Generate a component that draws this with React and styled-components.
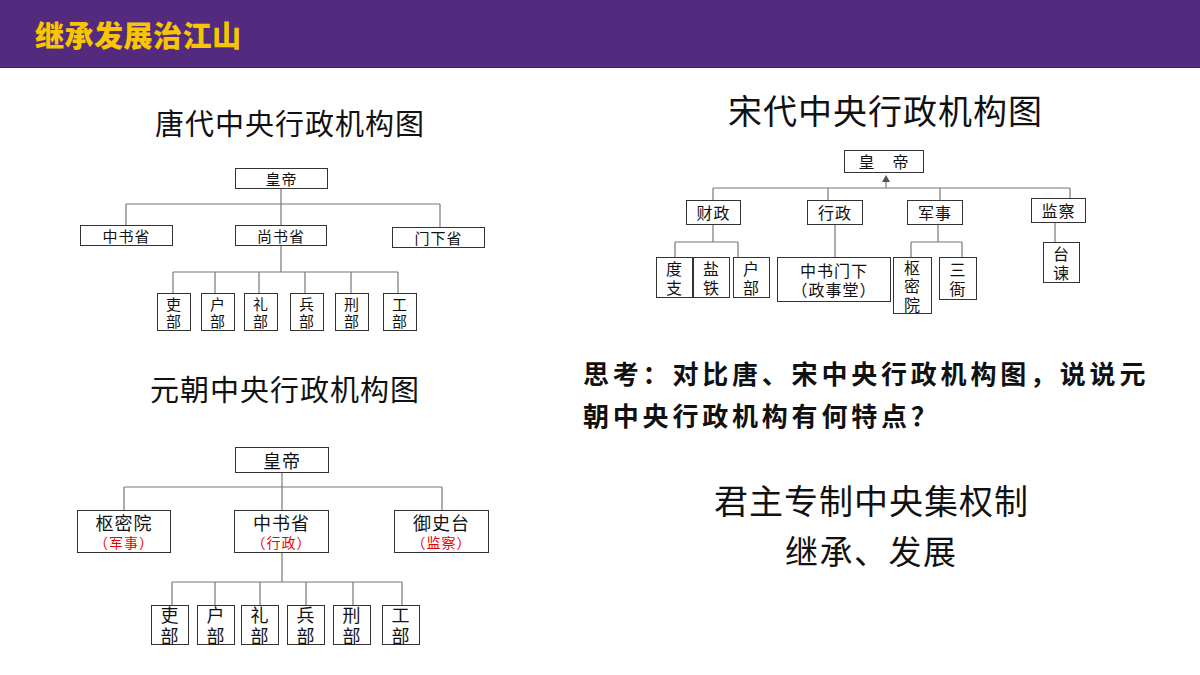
import React from 'react';
import styled, { createGlobalStyle } from 'styled-components';

const GlobalStyle = createGlobalStyle`
  html, body { margin: 0; padding: 0; background: #fff; }
  body { font-family: "Noto Sans CJK SC", "Noto Sans", sans-serif; color: #111; }
`;

const tang = {
  ox: 80, oy: 165, w: 420, h: 175, fs: 15,
  nodes: [
    { x: 235, y: 168, w: 93, h: 21, t: ['皇帝'] },
    { x: 80, y: 225, w: 93, h: 21, t: ['中书省'] },
    { x: 235, y: 225, w: 92, h: 21, t: ['尚书省'] },
    { x: 392, y: 227, w: 93, h: 21, t: ['门下省'] },
    ...[[157, '吏'], [201, '户'], [244, '礼'], [290, '兵'], [335, '刑'], [383, '工']].map(([x, c]) => ({
      x, y: 293, w: 34, h: 38, t: [c, '部'],
    })),
  ],
  lines: [
    [281, 189, 281, 225], [126, 204, 440, 204], [126, 204, 126, 225], [440, 204, 440, 227],
    [281, 246, 281, 272], [173, 272, 398, 272],
    ...[173, 215, 259, 305, 351, 398].map(x => [x, 272, x, 293]),
  ],
};

const yuan = {
  ox: 75, oy: 440, w: 420, h: 205, fs: 18,
  nodes: [
    { x: 235, y: 442, w: 94, h: 26, t: ['皇帝'] },
    { x: 77, y: 505, w: 94, h: 43, t: ['枢密院'], sub: '（军事）' },
    { x: 234, y: 505, w: 95, h: 43, t: ['中书省'], sub: '（行政）' },
    { x: 394, y: 505, w: 95, h: 43, t: ['御史台'], sub: '（监察）' },
    ...[[151, '吏'], [197, '户'], [241, '礼'], [287, '兵'], [333, '刑'], [382, '工']].map(([x, c]) => ({
      x, y: 600, w: 38, h: 40, t: [c, '部'],
    })),
  ],
  lines: [
    [282, 468, 282, 505], [124, 482, 442, 482], [124, 482, 124, 505], [442, 482, 442, 505],
    [282, 548, 282, 577], [172, 577, 402, 577],
    ...[172, 215, 260, 306, 353, 402].map(x => [x, 577, x, 600]),
  ],
};

const song = {
  ox: 640, oy: 145, w: 460, h: 175, fs: 16,
  nodes: [
    { x: 844, y: 150, w: 80, h: 23, t: ['皇　帝'] },
    { x: 686, y: 200, w: 55, h: 25, t: ['财政'] },
    { x: 807, y: 200, w: 56, h: 25, t: ['行政'] },
    { x: 907, y: 200, w: 56, h: 25, t: ['军事'] },
    { x: 1031, y: 198, w: 55, h: 25, t: ['监察'] },
    { x: 656, y: 257, w: 37, h: 41, t: ['度', '支'] },
    { x: 693, y: 257, w: 37, h: 41, t: ['盐', '铁'] },
    { x: 733, y: 257, w: 37, h: 41, t: ['户', '部'] },
    { x: 777, y: 257, w: 114, h: 45, t: ['中书门下', '（政事堂）'] },
    { x: 893, y: 257, w: 39, h: 57, t: ['枢', '密', '院'] },
    { x: 939, y: 257, w: 38, h: 43, t: ['三', '衙'] },
    { x: 1043, y: 242, w: 37, h: 41, t: ['台', '谏'] },
  ],
  lines: [
    [886, 188, 886, 178], [713, 188, 1070, 188],
    [713, 188, 713, 200], [828, 188, 828, 200], [940, 188, 940, 200], [1070, 188, 1070, 198],
    [713, 225, 713, 242], [675, 242, 738, 242], [675, 242, 675, 257], [738, 242, 738, 257],
    [835, 225, 835, 257],
    [938, 225, 938, 242], [911, 242, 962, 242], [911, 242, 911, 257], [962, 242, 962, 257],
    [1055, 223, 1055, 242],
  ],
  arrow: [886, 175],
};

const Chart = ({ data }) => (
  <ChartBox $x={data.ox} $w={data.w} $h={data.h}>
    <svg width={data.w} height={data.h} style={{ position: 'absolute', left: 0, top: 0 }}>
      {data.lines.map(([x1, y1, x2, y2], i) => (
        <line key={i} x1={x1 - data.ox} y1={y1 - data.oy} x2={x2 - data.ox} y2={y2 - data.oy}
          stroke="#777" strokeWidth="1.2" />
      ))}
      {data.arrow && (
        <polygon
          points={`${data.arrow[0] - data.ox},${data.arrow[1] - data.oy} ${data.arrow[0] - data.ox - 4},${data.arrow[1] - data.oy + 7} ${data.arrow[0] - data.ox + 4},${data.arrow[1] - data.oy + 7}`}
          fill="#555" />
      )}
    </svg>
    {data.nodes.map((n, i) => (
      <Node key={i} $x={n.x - data.ox} $y={n.y - data.oy} $w={n.w} $h={n.h} $fs={data.fs}>
        {n.t.map((l, j) => <Line key={j}>{l}</Line>)}
        {n.sub && <Sub>{n.sub}</Sub>}
      </Node>
    ))}
  </ChartBox>
);

export default function App() {
  return (
    <Page>
      <GlobalStyle />
      <Header>继承发展治江山</Header>
      <Body>
        <Left>
          <Title $pl={155} $mt={34} $mb={23}>唐代中央行政机构图</Title>
          <Chart data={tang} />
          <Title $pl={150} $mt={28} $mb={37}>元朝中央行政机构图</Title>
          <Chart data={yuan} />
        </Left>
        <Right>
          <SongTitle>宋代中央行政机构图</SongTitle>
          <Chart data={song} />
          <Think>思考：对比唐、宋中央行政机构图，说说元<br />朝中央行政机构有何特点？</Think>
          <Answer>君主专制中央集权制</Answer>
          <Answer2>继承、发展</Answer2>
        </Right>
      </Body>
    </Page>
  );
}

const Page = styled.div`
  width: 1200px;
  height: 675px;
  overflow: hidden;
  background: #fff;
`;

const Header = styled.div`
  height: 68px;
  background: #532a7e;
  border-bottom: 1px solid #3f1d63;
  box-sizing: border-box;
  display: flex;
  align-items: center;
  padding-left: 35px;
  color: #f7c600;
  font-size: 29px;
  font-weight: 900;
  letter-spacing: 0.5px;
`;

const Body = styled.div`
  display: grid;
  grid-template-columns: 580px 620px;
`;

const Left = styled.div`
  display: flex;
  flex-direction: column;
`;

const Right = styled.div`
  display: flex;
  flex-direction: column;
`;

const Title = styled.div`
  font-size: 29px;
  line-height: 40px;
  height: 40px;
  padding-left: ${p => p.$pl}px;
  margin-top: ${p => p.$mt}px;
  margin-bottom: ${p => p.$mb}px;
  letter-spacing: 1px;
  color: #111;
`;

const SongTitle = styled.div`
  font-size: 34px;
  line-height: 44px;
  margin-top: 20px;
  padding-left: 148px;
  margin-bottom: 13px;
  letter-spacing: 1px;
`;

const ChartBox = styled.div`
  position: relative;
  width: ${p => p.$w}px;
  height: ${p => p.$h}px;
  margin-left: ${p => p.$x % 580}px;
`;

const Node = styled.div`
  position: absolute;
  left: ${p => p.$x}px;
  top: ${p => p.$y}px;
  width: ${p => p.$w}px;
  height: ${p => p.$h}px;
  box-sizing: border-box;
  border: 1.5px solid #333;
  background: #fff;
  display: flex;
  flex-direction: column;
  align-items: center;
  justify-content: center;
  font-size: ${p => p.$fs}px;
  letter-spacing: 1px;
  white-space: nowrap;
`;

const Line = styled.span`
  display: block;
  line-height: 1.15;
`;

const Sub = styled.span`
  color: #e00;
  font-size: 14px;
  line-height: 1.2;
  margin-top: 2px;
`;

const Think = styled.div`
  margin-top: 32px;
  padding-left: 3px;
  font-size: 26px;
  font-weight: 700;
  line-height: 42px;
  letter-spacing: 3.8px;
  color: #111;
`;

const Answer = styled.div`
  margin-top: 42px;
  padding-left: 134px;
  font-size: 34px;
  line-height: 44px;
  letter-spacing: 1px;
`;

const Answer2 = styled.div`
  margin-top: 6px;
  padding-left: 205px;
  font-size: 33px;
  line-height: 44px;
  letter-spacing: 1.5px;
`;
